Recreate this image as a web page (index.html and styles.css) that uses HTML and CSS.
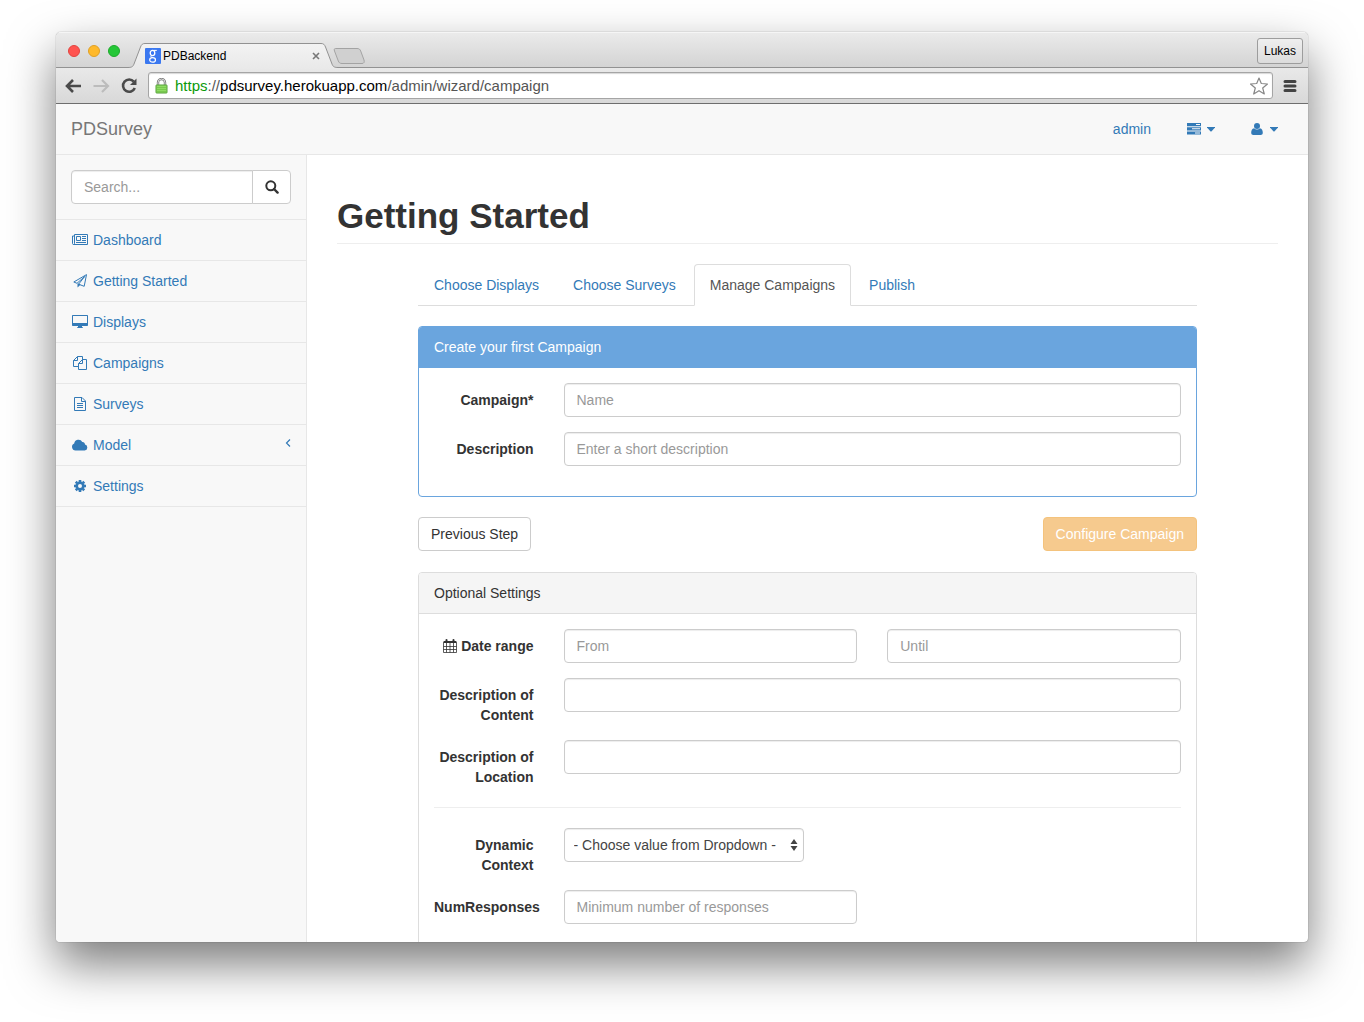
FILE: index.html
```html
<!DOCTYPE html>
<html lang="en">
<head>
<meta charset="utf-8">
<meta name="viewport" content="width=device-width, initial-scale=1">
<title>PDBackend</title>
<link rel="stylesheet" href="styles.css">
</head>
<body>
<div class="window">
  <div class="tabstrip">
    <div class="lights">
      <button class="light light-close" type="button" aria-label="Close window"></button>
      <button class="light light-min" type="button" aria-label="Minimize window"></button>
      <button class="light light-zoom" type="button" aria-label="Zoom window"></button>
    </div>
    <div class="tab">
      <svg class="tab-shape" width="210" height="26" viewBox="0 0 210 26" aria-hidden="true">
        <defs><linearGradient id="tabfill" x1="0" y1="0" x2="0" y2="1"><stop offset="0" stop-color="#f3f3f3"/><stop offset="1" stop-color="#e9e9e9"/></linearGradient></defs>
        <path d="M0 26V24.500C4 24.500 5 23.500 6 21L12.500 4C13.500 1.500 14.500.5 17 .5H193C195.500 .5 196.500 1.500 197.500 4L204 21C205 23.500 206 24.500 210 24.500V26Z" fill="url(#tabfill)"/>
        <path d="M0 24.500C4 24.500 5 23.500 6 21L12.500 4C13.500 1.500 14.500.5 17 .5H193C195.500 .5 196.500 1.500 197.500 4L204 21C205 23.500 206 24.500 210 24.500" fill="none" stroke="#929292"/>
      </svg>
      <svg class="favicon" width="16" height="16" viewBox="0 0 16 16" aria-hidden="true">
        <rect width="16" height="16" rx="1" fill="#3b78f0"/>
        <g fill="none" stroke="#fff"><ellipse cx="7.500" cy="5" rx="2.300" ry="2.600" stroke-width="1.300"/><path d="M8.500 2.400H11.800M6.200 7.400C5.300 8.600 6 9.200 7.500 9.500" stroke-width="1"/><ellipse cx="7.600" cy="11.900" rx="2.900" ry="2.200" stroke-width="1.200"/></g>
      </svg>
      <span class="tab-title">PDBackend</span>
      <button class="tab-close" type="button" aria-label="Close tab"><svg width="8" height="8" viewBox="0 0 8 8"><path d="M1 1L7 7M7 1L1 7" stroke="#777" stroke-width="1.600"/></svg></button>
    </div>
    <button class="new-tab" type="button" aria-label="New tab"><svg width="34" height="18" viewBox="0 0 34 18"><path d="M3.500 1.500H25C27 1.500 28 2.200 28.700 4L32 13C32.600 15 32 16.500 30 16.500H10C8 16.500 7 15.800 6.300 14L2.500 4C2 2.500 2.200 1.500 3.500 1.500Z" fill="#d0d0d0" stroke="#a3a3a3"/></svg></button>
    <button class="profile" type="button">Lukas</button>
  </div>

  <div class="toolbar">
    <button class="tool" type="button" aria-label="Back"><svg width="18" height="16" viewBox="0 0 18 16"><path d="M17 8H3.500M9 2L3 8L9 14" fill="none" stroke="#4a4a4a" stroke-width="2.600"/></svg></button>
    <button class="tool" type="button" aria-label="Forward"><svg width="18" height="16" viewBox="0 0 18 16"><path d="M1.500 8H15M10 2L16 8L10 14" fill="none" stroke="#bcbcbc" stroke-width="2.200"/></svg></button>
    <button class="tool" type="button" aria-label="Reload"><svg width="18" height="16" viewBox="0 0 18 16"><path d="M13.800 3.700A6.100 6.100 0 1 0 14.800 10" fill="none" stroke="#4a4a4a" stroke-width="2.600"/><path d="M16.500 .5V7H10Z" fill="#4a4a4a"/></svg></button>
    <div class="omnibox">
      <svg width="13" height="16" viewBox="0 0 13 16" aria-hidden="true"><path d="M3 7.500V4.500A3.500 3.500 0 0 1 10 4.500V7.500" fill="none" stroke="#777" stroke-width="2.400"/><path d="M3 7.500V4.500A3.500 3.500 0 0 1 10 4.500V7.500" fill="none" stroke="#ddd" stroke-width="1"/><rect x="1" y="7" width="11" height="8" rx=".5" fill="#8fdc63" stroke="#55a038"/><path d="M2 9.500H11M2 11.500H11M2 13.500H11" stroke="#78c94e"/></svg>
      <span class="url"><span class="url-scheme">https</span><span class="url-dim">://</span>pdsurvey.herokuapp.com<span class="url-dim">/admin/wizard/campaign</span></span>
      <button class="tool star" type="button" aria-label="Bookmark"><svg width="20" height="18" viewBox="0 0 20 18"><path d="M10 1L12.300 6.500L18.500 7L13.700 11L15.300 17L10 13.700L4.700 17L6.300 11L1.500 7L7.700 6.500Z" fill="#fff" stroke="#888" stroke-width="1.200" stroke-linejoin="round"/></svg></button>
    </div>
    <button class="tool menu" type="button" aria-label="Menu"><svg width="14" height="14" viewBox="0 0 14 14"><path d="M2 2.500H12M2 7H12M2 11.500H12" stroke="#444" stroke-width="3" stroke-linecap="round"/></svg></button>
  </div>

  <header class="navbar">
    <a class="brand" href="#">PDSurvey</a>
    <nav class="topnav" aria-label="Account">
      <a class="topnav-item" href="#">admin</a>
      <a class="topnav-item topnav-tasks" href="#" aria-label="Tasks">
        <svg width="14" height="12" viewBox="0 0 14 12" fill="currentColor"><path fill-rule="evenodd" d="M0 0H14V3.200H0ZM9 1.100V2.100H13V1.100ZM0 4.200H14V7.400H0ZM5 5.300V6.300H13V5.300ZM0 8.400H14V11.600H0ZM8 9.500V10.500H13V9.500Z"/></svg>
        <svg width="8" height="5" viewBox="0 0 8 5"><path d="M0 0H8V.6L4.400 4.600H3.600L0 .6Z" fill="currentColor"/></svg>
      </a>
      <a class="topnav-item topnav-user" href="#" aria-label="User">
        <svg width="12" height="12" viewBox="0 0 12 12" fill="currentColor"><circle cx="6" cy="3" r="3"/><path d="M3.100 5.200C1 5.400 .2 7.500 .2 9.800C.2 11.200 1.100 12 2.400 12H9.600C10.900 12 11.800 11.200 11.800 9.800C11.800 7.500 11 5.400 8.900 5.200C7.300 6.900 4.700 6.900 3.100 5.200Z"/></svg>
        <svg width="8" height="5" viewBox="0 0 8 5"><path d="M0 0H8V.6L4.400 4.600H3.600L0 .6Z" fill="currentColor"/></svg>
      </a>
    </nav>
  </header>

  <div class="page">
    <aside class="sidebar">
      <form class="search">
        <input class="control search-input" type="text" placeholder="Search..." aria-label="Search">
        <button class="search-button" type="button" aria-label="Search"><svg width="14" height="14" viewBox="0 0 14 14"><circle cx="5.800" cy="5.800" r="4.500" fill="none" stroke="#333" stroke-width="2"/><path d="M9 9L12.600 12.600" stroke="#333" stroke-width="2.400" stroke-linecap="round"/></svg></button>
      </form>
      <nav class="side-nav" aria-label="Main">
        <a class="side-link" href="#"><svg width="18" height="14" viewBox="0 0 18 14" fill="none" stroke="currentColor"><path d="M3.500 1.500H16.500V11.500H2.500C1.800 11.500 1.500 11 1.500 10.500V3H3.500M3.500 1.500V10.500C3.500 11.200 3 11.500 2.500 11.500M5.500 3.500H9.500V7.500H5.500ZM11 3.500H15M11 5.500H15M11 7.500H15M5 9.500H15"/></svg>Dashboard</a>
        <a class="side-link" href="#"><svg width="18" height="14" viewBox="0 0 18 14"><path d="M15.500 .6L2.800 8L6 9.300L13.800 2.400L7.600 10.200L13.200 12.300Z" fill="none" stroke="currentColor" stroke-linejoin="round"/><path d="M6.500 9.500V13.600L9.500 10.700L8 9.700Z" fill="currentColor"/></svg>Getting Started</a>
        <a class="side-link" href="#"><svg width="18" height="14" viewBox="0 0 18 14" fill="currentColor"><path fill-rule="evenodd" d="M2 0H16C16.600 0 17 .4 17 1V10C17 10.600 16.600 11 16 11H11V12.200H12V13H6V12.200H7V11H2C1.400 11 1 10.600 1 10V1C1 .4 1.400 0 2 0ZM2 1V8H16V1Z"/></svg>Displays</a>
        <a class="side-link" href="#"><svg width="18" height="14" viewBox="0 0 18 14" fill="none" stroke="currentColor"><path d="M7.500 10.500H2.500V4.500L6.500 .5H11.500V4M6.500 .5V4.500H2.500M11.500 3.500H15.500V13.500H7.500V7.500L11.500 3.500ZM11.500 3.500V7.500H7.500"/></svg>Campaigns</a>
        <a class="side-link" href="#"><svg width="18" height="14" viewBox="0 0 18 14" fill="none" stroke="currentColor"><path d="M3.500 .5H11L14.500 4V13.500H3.500ZM10.500 .5V4.500H14.500M6 6.500H12M6 8.500H12M6 10.500H12"/></svg>Surveys</a>
        <a class="side-link" href="#"><svg width="18" height="14" viewBox="0 0 18 14" fill="currentColor"><path d="M4.500 12.500A3.600 3.600 0 0 1 3.200 5.600A4.300 4.300 0 0 1 11.300 4A2.400 2.400 0 0 1 14 6.600A3 3 0 0 1 13.700 12.500Z"/></svg>Model<svg class="chevron" width="6" height="8" viewBox="0 0 6 8" fill="none" stroke="currentColor" stroke-width="1.200"><path d="M5 .5L1.500 4L5 7.500"/></svg></a>
        <a class="side-link" href="#"><svg width="18" height="14" viewBox="0 0 18 14"><circle cx="9" cy="7" r="3.300" fill="none" stroke="currentColor" stroke-width="2.600"/><path d="M9 1V3M9 11V13M3 7H5M13 7H15M4.750 2.750L6.200 4.200M11.800 9.800L13.250 11.250M4.750 11.250L6.200 9.800M11.800 4.200L13.250 2.750" stroke="currentColor" stroke-width="2.600"/></svg>Settings</a>
      </nav>
    </aside>

    <main class="content">
      <h1 class="page-title">Getting Started</h1>
      <div class="wizard">
        <nav class="steps" aria-label="Wizard steps">
          <a class="step" href="#">Choose Displays</a>
          <a class="step" href="#">Choose Surveys</a>
          <a class="step step-active" href="#" aria-current="step">Manage Campaigns</a>
          <a class="step" href="#">Publish</a>
        </nav>

        <section class="panel panel-primary">
          <h2 class="panel-heading">Create your first Campaign</h2>
          <div class="panel-body">
            <div class="field">
              <label class="label" for="campaign">Campaign*</label>
              <input class="control wide" id="campaign" type="text" placeholder="Name">
            </div>
            <div class="field">
              <label class="label" for="description">Description</label>
              <input class="control wide" id="description" type="text" placeholder="Enter a short description">
            </div>
          </div>
        </section>

        <div class="actions">
          <button class="button" type="button">Previous Step</button>
          <button class="button button-warning" type="button" disabled>Configure Campaign</button>
        </div>

        <section class="panel">
          <h2 class="panel-heading">Optional Settings</h2>
          <div class="panel-body">
            <div class="field">
              <label class="label" for="from"><svg class="calendar" width="14" height="14" viewBox="0 0 14 14" fill="none" stroke="currentColor"><path d="M1 3H13" stroke-width="2"/><path d="M.5 2.500V13.500H13.500V2.500M.5 7.500H13.500M.5 10.500H13.500M3.500 4V13.500M7 4V13.500M10.500 4V13.500" stroke-width=".8"/><path d="M3.500 1V3M10.500 1V3" stroke-width="2" stroke-linecap="round"/></svg> Date range</label>
              <input class="control half" id="from" type="text" placeholder="From">
              <input class="control half" id="until" type="text" placeholder="Until" aria-label="Until">
            </div>
            <div class="field">
              <label class="label" for="content">Description of Content</label>
              <input class="control wide" id="content" type="text">
            </div>
            <div class="field">
              <label class="label" for="location">Description of Location</label>
              <input class="control wide" id="location" type="text">
            </div>
            <hr class="rule">
            <div class="field">
              <label class="label" for="context">Dynamic Context</label>
              <div class="wide">
                <span class="select-wrap">
                  <select class="control select" id="context"><option>- Choose value from Dropdown -</option></select>
                  <svg class="select-arrows" width="8" height="12" viewBox="0 0 8 12" aria-hidden="true"><path d="M.5 5L4 0L7.500 5ZM.5 7H7.500L4 12Z" fill="#444"/></svg>
                </span>
              </div>
            </div>
            <div class="field">
              <label class="label" for="responses">NumResponses</label>
              <input class="control half" id="responses" type="text" placeholder="Minimum number of responses">
            </div>
          </div>
        </section>
      </div>
    </main>
  </div>
</div>
</body>
</html>
```
FILE: styles.css
```css
*, *::before, *::after { box-sizing: border-box; }

body {
  margin: 0;
  height: 100vh;
  padding: 32px 56px 80px;
  background: #fff;
  color: #333;
  font: 14px/20px "Helvetica Neue", "Liberation Sans", Arial, sans-serif;
  overflow: hidden;
}

a { color: #337ab7; text-decoration: none; }
button, input, select { font: inherit; color: inherit; margin: 0; }
button { cursor: pointer; }
svg { display: block; flex: none; }

.window {
  display: flex;
  flex-direction: column;
  height: 100%;
  border-radius: 5px 5px 4px 4px;
  overflow: hidden;
  background: #fff;
  box-shadow: 0 0 1px rgba(0, 0, 0, .6), 0 22px 48px rgba(0, 0, 0, .52);
}

/* Browser chrome */
.tabstrip {
  display: flex;
  flex: none;
  align-items: flex-end;
  height: 36px;
  padding: 0 5px 0 12px;
  background: linear-gradient(#ebebeb, #d3d3d3);
  box-shadow: inset 0 1px #f5f5f5, inset 0 -1px #929292;
}
.lights { display: flex; gap: 8px; padding-bottom: 11px; }
.light { width: 12px; height: 12px; padding: 0; border: 1px solid; border-radius: 50%; }
.light-close { background: #ff5450; border-color: #e2443f; }
.light-min { background: #ffb92b; border-color: #e0a025; }
.light-zoom { background: #25c737; border-color: #1daa2b; }
.tab {
  position: relative;
  display: flex;
  align-items: center;
  gap: 2px;
  width: 210px;
  height: 25px;
  margin-left: 8px;
  padding: 0 18px 0 17px;
}
.tab-shape { position: absolute; left: 0; top: 0; }
.favicon, .tab-title, .tab-close { position: relative; }
.tab-title { flex: 1; color: #000; font-size: 12px; }
.tab-close { padding: 0; border: 0; background: none; }
.new-tab { margin-left: -6px; padding: 0 0 3px; border: 0; background: none; }
.profile {
  height: 26px;
  margin: 0 0 4px auto;
  padding: 0 6px;
  border: 1px solid #9d9d9d;
  border-radius: 3px;
  background: linear-gradient(#efefef, #dcdcdc);
  color: #000;
  font-size: 12px;
}
.toolbar {
  display: flex;
  flex: none;
  align-items: center;
  gap: 10px;
  height: 36px;
  padding: 0 11px 0 8px;
  border-bottom: 1px solid #6e6e6e;
  background: linear-gradient(#e9e9e9, #d8d8d8);
}
.tool { padding: 0; border: 0; background: none; }
.omnibox {
  display: flex;
  flex: 1;
  align-items: center;
  gap: 7px;
  height: 27px;
  padding: 0 3px 0 6px;
  border: 1px solid #a5a5a5;
  border-radius: 3px;
  background: #fff;
  box-shadow: inset 0 1px 1px #d8d8d8;
}
.url { flex: 1; color: #000; font-size: 15px; white-space: nowrap; }
.url-scheme { color: #0a9a0a; }
.url-dim { color: #555; }

/* Application header */
.navbar {
  display: flex;
  flex: none;
  align-items: center;
  justify-content: space-between;
  height: 51px;
  padding: 0 30px 0 15px;
  border-bottom: 1px solid #e7e7e7;
  background: #f8f8f8;
}
.brand { color: #777; font-size: 18px; }
.topnav { display: flex; align-items: center; gap: 36px; }
.topnav-item { display: flex; align-items: center; }
.topnav-tasks { gap: 6px; }
.topnav-user { gap: 7px; }

.page { display: flex; flex: 1; min-height: 0; }

/* Sidebar */
.sidebar {
  flex: 0 0 251px;
  border-right: 1px solid #e7e7e7;
  background: #f8f8f8;
}
.search { display: flex; padding: 15px; border-bottom: 1px solid #e7e7e7; }
.search-button {
  display: flex;
  flex: none;
  align-items: center;
  justify-content: center;
  width: 39px;
  margin-left: -1px;
  border: 1px solid #ccc;
  border-radius: 0 4px 4px 0;
  background: #fff;
}
.side-link {
  display: flex;
  align-items: center;
  gap: 4px;
  padding: 10px 15px;
  border-bottom: 1px solid #e7e7e7;
}
.chevron { margin: 0 0 4px auto; }

/* Content */
.content { flex: 1; min-width: 0; padding: 41px 30px 0; overflow: hidden; }
.page-title {
  margin: 0 0 20px;
  padding-bottom: 7px;
  border-bottom: 1px solid #eee;
  font-size: 35px;
  font-weight: 700;
  line-height: 40px;
}
.wizard { margin: 0 81px; }

.steps { display: flex; gap: 2px; border-bottom: 1px solid #ddd; margin-bottom: 20px; }
.step {
  margin-bottom: -1px;
  padding: 10px 15px;
  border: 1px solid transparent;
  border-radius: 4px 4px 0 0;
  white-space: nowrap;
}
.step-active { border-color: #ddd #ddd #fff; background: #fff; color: #555; }

.panel {
  margin-bottom: 20px;
  border: 1px solid #ddd;
  border-radius: 4px;
  background: #fff;
}
.panel-heading {
  margin: 0;
  padding: 10px 15px;
  border-bottom: 1px solid #ddd;
  border-radius: 3px 3px 0 0;
  background: #f5f5f5;
  font-size: 14px;
  font-weight: 400;
}
.panel-primary { border-color: #6aa5de; }
.panel-primary .panel-heading { border-color: #6aa5de; background: #6aa5de; color: #fff; }
.panel-body { padding: 15px; }

.field {
  display: grid;
  grid-template-columns: repeat(12, minmax(0, 1fr));
  column-gap: 30px;
  align-items: start;
  margin-bottom: 15px;
}
.label { grid-column: span 2; padding-top: 7px; font-weight: 700; text-align: right; }
.wide { grid-column: span 10; }
.half { grid-column: span 5; }
.calendar { display: inline-block; vertical-align: -2px; }

.control {
  width: 100%;
  height: 34px;
  padding: 6px 12px;
  border: 1px solid #ccc;
  border-radius: 4px;
  background: #fff;
  color: #555;
  box-shadow: inset 0 1px 1px rgba(0, 0, 0, .075);
}
.control::placeholder { color: #999; opacity: 1; }
.search .control { border-radius: 4px 0 0 4px; }
.select-wrap { position: relative; display: inline-block; width: 240px; vertical-align: top; }
.select { appearance: none; padding: 6px 24px 6px 9px; color: #444; }
.select-arrows { position: absolute; right: 6px; top: 11px; pointer-events: none; }
.rule { margin: 20px 0; border: 0; border-top: 1px solid #eee; }

.actions { display: flex; justify-content: space-between; margin-bottom: 21px; }
.button {
  height: 34px;
  padding: 6px 12px;
  border: 1px solid #ccc;
  border-radius: 4px;
  background: #fff;
}
.button-warning { border-color: #f4c37d; background: #f6ca8e; color: #fff; cursor: default; }
```
